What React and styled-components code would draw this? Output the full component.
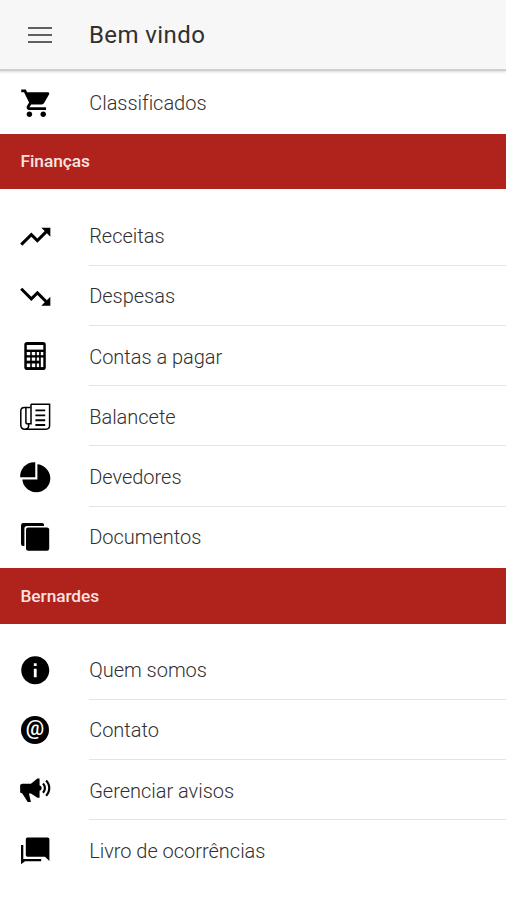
import React from 'react';
import styled, { createGlobalStyle } from 'styled-components';
import {
  IoMdCart,
  IoMdTrendingUp,
  IoMdTrendingDown,
  IoMdPie,
  IoMdInformationCircle,
  IoMdMegaphone,
} from 'react-icons/io';

const GlobalStyle = createGlobalStyle`
  * {
    box-sizing: border-box;
  }

  body {
    margin: 0;
    background-color: #fff;
    font-family: Roboto, sans-serif;
  }
`;

const Page = styled.div`
  height: 900px;
  overflow: hidden;
  background-color: #fff;
`;

const Toolbar = styled.header`
  display: flex;
  align-items: center;
  height: 69px;
  padding-left: 28px;
  background-color: #f7f7f7;
  box-shadow: 0 2px 1px #cfcfcf, 0 3px 3px #dedede;
`;

const MenuButton = styled.button`
  display: flex;
  flex-direction: column;
  gap: 5px;
  width: 61px;
  padding: 0;
  border: none;
  background: none;
`;

const MenuBar = styled.span`
  width: 23.5px;
  height: 2px;
  background-color: #606060;
`;

const Title = styled.h1`
  margin: 0;
  color: #303030;
  font-size: 24px;
  font-weight: 400;
  line-height: 32px;
  letter-spacing: 0.4px;
`;

const List = styled.ul`
  margin: 0;
  padding: ${props => props.$top}px 0 1.4px;
  list-style: none;
`;

const Item = styled.li`
  display: flex;
  align-items: center;
  height: 60.25px;
  padding-left: 17px;
`;

const IconSlot = styled.span`
  display: flex;
  justify-content: center;
  width: 36px;
  margin-right: 36.2px;
  padding-top: 1px;
  color: #000;

  svg {
    width: ${props => props.$size || 34.5}px;
    height: ${props => props.$size || 34.5}px;
  }
`;

const Label = styled.span`
  display: flex;
  align-items: center;
  flex: 1;
  height: 100%;
  padding-top: 2.2px;
  border-bottom: 1.5px solid ${props => (props.$last ? 'transparent' : '#e4e4e4')};
  color: #303030;
  font-size: 20px;
  font-weight: 300;
  letter-spacing: -0.02px;
`;

const SectionHeader = styled.h2`
  display: flex;
  align-items: center;
  height: 55.5px;
  margin: 0;
  padding: 0 0 0.6px 20.5px;
  background-color: #af231c;
  color: #fae3e1;
  font-size: 17.3px;
  font-weight: 500;
  letter-spacing: -0.05px;
`;

const CalculatorIcon = () => (
  <svg viewBox="0 0 36 36">
    <rect x="7.3" y="4" width="21.5" height="28" rx="2.8" />
    <g fill="#fff">
      <rect x="9.8" y="7" width="16.5" height="4.6" />
      <rect x="9.8" y="14" width="3.4" height="3.2" />
      <rect x="14.8" y="14" width="3.4" height="3.2" />
      <rect x="19.8" y="14" width="2.3" height="3.2" />
      <rect x="23.8" y="14" width="2.5" height="3.2" />
      <rect x="9.8" y="19.5" width="3.4" height="3.2" />
      <rect x="14.8" y="19.5" width="3.4" height="3.2" />
      <rect x="19.8" y="19.5" width="2.3" height="3.2" />
      <rect x="9.8" y="25.5" width="3.4" height="3.6" />
      <rect x="14.8" y="25.5" width="3.4" height="3.6" />
      <rect x="19.8" y="25.5" width="2.3" height="3.6" />
      <rect x="23.8" y="19.5" width="2.5" height="9.6" />
    </g>
  </svg>
);

const PaperIcon = () => (
  <svg viewBox="0 0 36 36" fill="none" stroke="#000" strokeWidth="1.5">
    <path d="M14 5.2H32.6V26.6Q32.6 30.2 29 30.2H8Q3.8 30.2 3.8 26V12.2Q3.8 8.6 7.4 8.6H13.6" />
    <path d="M14 5V24.8H11.6V27.6Q11.2 30 8.6 30" />
    <path d="M8.9 9V23.5Q9 25 11.4 25" />
    <path strokeWidth="1.9" d="M18.4 11.4H28.2M18.4 16.4H28.2M18.4 21.2H28.2M18.4 26H28.2" />
  </svg>
);

const DocumentsIcon = () => (
  <svg viewBox="0 0 36 36">
    <path d="M6.4 4H25.2Q27 4 27 5.8V7H10.2Q7.4 7 7.4 9.8V27H6Q4 27 4 25V6.4Q4 4 6.4 4Z" />
    <rect x="9" y="8.4" width="23.2" height="23.4" rx="2.2" />
  </svg>
);

const AtIcon = () => (
  <svg viewBox="0 0 36 36">
    <circle cx="18" cy="18" r="14" />
    <text x="18" y="23" textAnchor="middle" fontSize="20.5" fontWeight="500" fill="#fff">
      @
    </text>
  </svg>
);

const ChatboxesIcon = () => (
  <svg viewBox="0 0 36 36">
    <path d="M10.6 4.4H30.6Q32.4 4.4 32.4 6.2V28L28 23.8H10.6Q8.8 23.8 8.8 22V6.2Q8.8 4.4 10.6 4.4Z" />
    <path d="M4 12H6.3V26H24.2V28.2H8L4 31.2Z" />
  </svg>
);

const financas = [
  { label: 'Receitas', icon: IoMdTrendingUp },
  { label: 'Despesas', icon: IoMdTrendingDown },
  { label: 'Contas a pagar', icon: CalculatorIcon, size: 36 },
  { label: 'Balancete', icon: PaperIcon, size: 36 },
  { label: 'Devedores', icon: IoMdPie },
  { label: 'Documentos', icon: DocumentsIcon, size: 36 },
];

const bernardes = [
  { label: 'Quem somos', icon: IoMdInformationCircle },
  { label: 'Contato', icon: AtIcon, size: 36 },
  { label: 'Gerenciar avisos', icon: IoMdMegaphone },
  { label: 'Livro de ocorrências', icon: ChatboxesIcon, size: 36 },
];

const MenuList = ({ items, top }) => (
  <List $top={top}>
    {items.map(({ label, icon: Icon, size }, index) => (
      <Item key={label}>
        <IconSlot $size={size}>
          <Icon />
        </IconSlot>
        <Label $last={index === items.length - 1}>{label}</Label>
      </Item>
    ))}
  </List>
);

const App = () => (
  <>
    <GlobalStyle />
    <Page>
      <Toolbar>
        <MenuButton aria-label="Menu">
          <MenuBar />
          <MenuBar />
          <MenuBar />
        </MenuButton>
        <Title>Bem vindo</Title>
      </Toolbar>
      <MenuList top={3.3} items={[{ label: 'Classificados', icon: IoMdCart }]} />
      <SectionHeader>Finanças</SectionHeader>
      <MenuList top={15.9} items={financas} />
      <SectionHeader>Bernardes</SectionHeader>
      <MenuList top={15.6} items={bernardes} />
    </Page>
  </>
);

export default App;
